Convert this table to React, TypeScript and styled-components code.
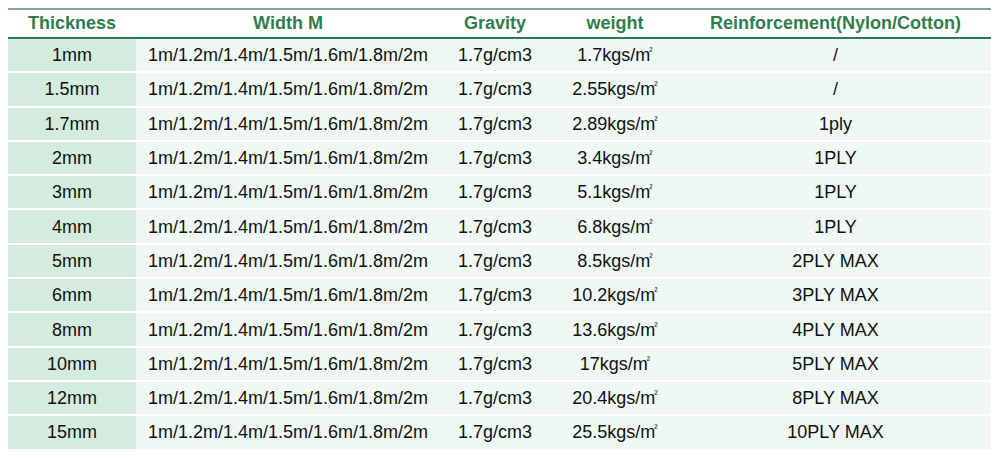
import React from "react";
import styled, { createGlobalStyle } from "styled-components";

const GlobalStyle = createGlobalStyle`
  html, body { margin: 0; padding: 0; background: #ffffff; }
  body { font-family: "Liberation Sans", Arial, sans-serif; }
`;

const Page = styled.div`
  padding: 8px 0 0 8px;
`;

const Table = styled.table`
  width: 983px;
  border-collapse: collapse;
  table-layout: fixed;
  border-top: 2px solid #7ea78c;
  border-bottom: 2px solid #2f7a4b;
`;

const HeadCell = styled.th`
  height: 27px;
  padding: 0;
  font-size: 18px;
  font-weight: bold;
  color: #2f7d4c;
  text-align: center;
  vertical-align: middle;
  border-bottom: 2px solid #2f7a4b;
  white-space: nowrap;
  line-height: 27px;
`;

const Cell = styled.td<{ $first?: boolean }>`
  height: 32.3px;
  padding: 0;
  font-size: 18px;
  color: #111111;
  text-align: center;
  vertical-align: middle;
  background: ${(p) => (p.$first ? "#d4ecdd" : "#eff8f2")};
  border-bottom: 2px solid #ffffff;
  white-space: nowrap;
  line-height: 32px;
`;

const Sup = styled.span`
  font-size: 10px;
  vertical-align: 7px;
  line-height: 0;
  margin-left: -1px;
`;

const cols = [128, 304, 110, 130, 311];

const rows: [string, string, string][] = [
  ["1mm", "1.7", "/"],
  ["1.5mm", "2.55", "/"],
  ["1.7mm", "2.89", "1ply"],
  ["2mm", "3.4", "1PLY"],
  ["3mm", "5.1", "1PLY"],
  ["4mm", "6.8", "1PLY"],
  ["5mm", "8.5", "2PLY MAX"],
  ["6mm", "10.2", "3PLY MAX"],
  ["8mm", "13.6", "4PLY MAX"],
  ["10mm", "17", "5PLY MAX"],
  ["12mm", "20.4", "8PLY MAX"],
  ["15mm", "25.5", "10PLY MAX"],
];

export default function App() {
  return (
    <>
      <GlobalStyle />
      <Page>
        <Table>
          <colgroup>
            {cols.map((w, i) => (
              <col key={i} style={{ width: w }} />
            ))}
          </colgroup>
          <thead>
            <tr>
              <HeadCell>Thickness</HeadCell>
              <HeadCell>Width M</HeadCell>
              <HeadCell>Gravity</HeadCell>
              <HeadCell>weight</HeadCell>
              <HeadCell>Reinforcement(Nylon/Cotton)</HeadCell>
            </tr>
          </thead>
          <tbody>
            {rows.map(([t, w, r]) => (
              <tr key={t}>
                <Cell $first>{t}</Cell>
                <Cell>1m/1.2m/1.4m/1.5m/1.6m/1.8m/2m</Cell>
                <Cell>1.7g/cm3</Cell>
                <Cell>
                  {w}kgs/m<Sup>²</Sup>
                </Cell>
                <Cell>{r}</Cell>
              </tr>
            ))}
          </tbody>
        </Table>
      </Page>
    </>
  );
}
